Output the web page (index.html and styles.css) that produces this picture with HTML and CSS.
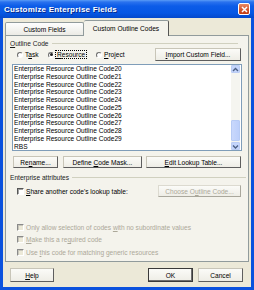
FILE: index.html
```html
<!DOCTYPE html>
<html lang="en">
<head>
  <meta charset="UTF-8" />
  <title>Customize Enterprise Fields</title>
  <link rel="stylesheet" href="styles.css">
</head>
<body>
  <div class="window">
    <div class="titlebar">
      <span class="title">Customize Enterprise Fields</span>
      <span class="close-btn">
        <svg width="7" height="7" viewBox="0 0 7 7"><path d="M1 1L6 6M6 1L1 6" stroke="#fff" stroke-width="1.5"/></svg>
      </span>
    </div>

    <div class="dialog">
      <div class="tabs">
        <div class="tab">Custom Fields</div>
        <div class="tab active">Custom Outline Codes</div>
      </div>

      <div class="panel">
        <div class="group-title short">
          <span><u>O</u>utline Code</span>
          <span class="rule"></span>
        </div>

        <div class="radio-row">
          <label class="radio task"><span class="radio-dot"></span><span>T<u>a</u>sk</span></label>
          <label class="radio resource"><span class="radio-dot on"></span><span class="focus"><u>R</u>esource</span></label>
          <label class="radio"><span class="radio-dot"></span><span><u>P</u>roject</span></label>
          <span class="btn import"><span><u>I</u>mport Custom Field...</span></span>
        </div>

        <div class="listbox">
          <div class="items">
            <div class="item">Enterprise Resource Outline Code20</div>
            <div class="item">Enterprise Resource Outline Code21</div>
            <div class="item">Enterprise Resource Outline Code22</div>
            <div class="item">Enterprise Resource Outline Code23</div>
            <div class="item">Enterprise Resource Outline Code24</div>
            <div class="item">Enterprise Resource Outline Code25</div>
            <div class="item">Enterprise Resource Outline Code26</div>
            <div class="item">Enterprise Resource Outline Code27</div>
            <div class="item">Enterprise Resource Outline Code28</div>
            <div class="item">Enterprise Resource Outline Code29</div>
            <div class="item">RBS</div>
          </div>
          <div class="scrollbar">
            <span class="arrow">
              <svg width="7" height="7" viewBox="0 0 7 7"><path d="M1 5L3.5 2.5L6 5" fill="none" stroke="#4d6185" stroke-width="1.4"/></svg>
            </span>
            <span class="track"><span class="thumb"></span></span>
            <span class="arrow">
              <svg width="7" height="7" viewBox="0 0 7 7"><path d="M1 2.5L3.5 5L6 2.5" fill="none" stroke="#4d6185" stroke-width="1.4"/></svg>
            </span>
          </div>
        </div>

        <div class="btn-row">
          <span class="btn rename"><span>Re<u>n</u>ame...</span></span>
          <span class="btn mask"><span>Define <u>C</u>ode Mask...</span></span>
          <span class="btn lookup"><span><u>E</u>dit Lookup Table...</span></span>
        </div>

        <div class="group-title">
          <span>Enterprise attributes</span>
          <span class="rule"></span>
        </div>

        <div class="share-row">
          <label class="check"><span class="box"></span><span><u>S</u>hare another code's lookup table:</span></label>
          <span class="btn choose disabled"><span>Choose O<u>u</u>tline Code...</span></span>
        </div>

        <div class="checks">
          <label class="check disabled"><span class="box"></span><span>Only allow selection of codes <u>w</u>ith no subordinate values</span></label>
          <label class="check disabled"><span class="box"></span><span><u>M</u>ake this a re<u>q</u>uired code</span></label>
          <label class="check disabled"><span class="box"></span><span>Use <u>t</u>his code for matching generic resources</span></label>
        </div>
      </div>

      <div class="footer">
        <span class="btn help"><span><u>H</u>elp</span></span>
        <span class="btn ok">OK</span>
        <span class="btn cancel">Cancel</span>
      </div>
    </div>
  </div>
</body>
</html>
```

FILE: styles.css
```css
* {
  box-sizing: border-box;
}

body {
  margin: 0;
  font-family: 'Liberation Sans', Arial, sans-serif;
  font-size: 6.6px;
  color: #000;
  background: #fff;
}

u {
  text-decoration-thickness: 1px;
  text-underline-offset: 1px;
}

.window {
  width: 254px;
  height: 290px;
  background: #0b52de;
  display: flex;
  flex-direction: column;
}

.titlebar {
  height: 18px;
  display: flex;
  align-items: center;
  padding: 0 4px 0 4px;
  background: linear-gradient(to bottom, #5a9cf7 0, #2a72ee 2px, #0c5ce8 6px, #0657e4 13px, #0449cc 18px);
}

.title {
  flex: 1;
  color: #fff;
  font-weight: bold;
  font-size: 8px;
  letter-spacing: 0.2px;
  text-shadow: 1px 1px 0 #0a2a8a;
}

.close-btn {
  width: 12px;
  height: 12px;
  display: flex;
  align-items: center;
  justify-content: center;
  border: 1px solid #fff;
  border-radius: 2px;
  background: linear-gradient(to bottom, #e98a64, #d4522a 60%, #c23c15);
}

.dialog {
  flex: 1;
  margin: 0 3px 3px 3px;
  background: #ece9d8;
  display: flex;
  flex-direction: column;
}

/* tabs */
.tabs {
  display: flex;
  align-items: flex-end;
  padding: 2px 0 0 2px;
  height: 17px;
}

.tab {
  height: 13px;
  width: 79px;
  display: flex;
  align-items: center;
  justify-content: center;
  border: 1px solid #919b9c;
  border-bottom: none;
  border-radius: 2px 2px 0 0;
  background: linear-gradient(to bottom, #fefefe, #ecebe5);
}

.tab.active {
  width: 85px;
  height: 16px;
  margin-bottom: -1px;
  position: relative;
  z-index: 1;
  background: #f4f3ec;
  border-left: none;
  border-right: 1px solid #555;
}

.panel {
  height: 227px;
  margin: 0 2px;
  border: 1px solid #919b9c;
  background: #f4f3ec;
  display: flex;
  flex-direction: column;
}

.group-title {
  margin-top: 3px;
  height: 8px;
  padding-left: 4px;
  display: flex;
  align-items: center;
  gap: 3px;
  color: #1a1a1a;
}

.group-title .rule {
  flex: 1;
  height: 1px;
  background: #d0d0bf;
  margin-right: 2px;
}

.group-title.short .rule {
  margin-right: 10px;
}

/* radios */
.radio-row {
  margin-top: 1px;
  height: 13px;
  padding: 0 7px 0 11px;
  display: flex;
  align-items: center;
}

.radio {
  display: flex;
  align-items: center;
}

.radio.task {
  width: 31px;
}

.radio.resource {
  width: 48px;
}

.radio-dot {
  width: 6px;
  height: 6px;
  margin-right: 2px;
  border-radius: 50%;
  border: 1px solid;
  border-color: #6f6f6f #fff #fff #6f6f6f;
  background: #fff;
  display: flex;
  align-items: center;
  justify-content: center;
}

.radio-dot.on::after {
  content: "";
  width: 3px;
  height: 3px;
  border-radius: 50%;
  background: #222;
}

.focus {
  outline: 1px dotted #000;
  outline-offset: 0;
  padding: 0 1px;
}

/* buttons */
.btn {
  height: 12px;
  display: flex;
  align-items: center;
  justify-content: center;
  border: 1px solid;
  border-color: #c8c5b8 #5e5e5e #5e5e5e #c8c5b8;
  background: linear-gradient(to bottom, #fbfbf8, #eeede6);
  white-space: nowrap;
}

.btn.disabled {
  color: #aca899;
  border-color: #dcdad0 #a9a79c #a9a79c #dcdad0;
}

.btn.import {
  margin-left: auto;
  width: 86px;
  height: 13px;
}

/* list */
.listbox {
  margin: 3px 0 0 6px;
  width: 230px;
  height: 87px;
  border: 1px solid #7f9db9;
  background: #fff;
  display: flex;
}

.items {
  flex: 1;
  padding-left: 1px;
}

.item {
  height: 7.75px;
  line-height: 7.75px;
  white-space: nowrap;
}

.scrollbar {
  width: 9px;
  margin-right: 1px;
  display: flex;
  flex-direction: column;
  background: #f5f5f0;
}

.arrow {
  height: 8px;
  display: flex;
  align-items: center;
  justify-content: center;
  border: 1px solid #bccdf4;
  border-radius: 1px;
  background: #c4d5fc;
}

.track {
  flex: 1;
  display: flex;
  flex-direction: column;
  justify-content: flex-end;
  padding-bottom: 1px;
}

.thumb {
  height: 21px;
  border: 1px solid #b7cbf5;
  border-radius: 1px;
  background: linear-gradient(to right, #c9d8fc, #bccffb);
}

.btn-row {
  margin-top: 5px;
  padding-left: 7px;
  display: flex;
}

.btn.rename {
  width: 45px;
}

.btn.mask {
  width: 79px;
  margin-left: 5px;
}

.btn.lookup {
  width: 95px;
  margin-left: 4px;
}

.group-title + .share-row {
  margin-top: 4px;
}

.btn-row + .group-title {
  margin-top: 5px;
}

/* checkboxes */
.share-row {
  height: 12px;
  padding: 0 7px 0 11px;
  display: flex;
  align-items: center;
}

.btn.choose {
  margin-left: auto;
  width: 83px;
}

.check {
  display: flex;
  align-items: center;
  gap: 2px;
}

.box {
  width: 7px;
  height: 7px;
  border: 1px solid;
  border-color: #555 #fff #fff #555;
  background: #fff;
  box-shadow: inset 1px 1px 0 #a0a0a0;
}

.checks {
  margin-top: 24px;
  padding-left: 11px;
}

.checks .check {
  height: 12.5px;
}

.check.disabled {
  color: #aca899;
}

.check.disabled .box {
  background: #ece9d8;
  border-color: #8a8a8a #fff #fff #8a8a8a;
  box-shadow: inset 1px 1px 0 #c8c6bb;
}

/* footer buttons */
.footer {
  flex: 1;
  padding: 6px 8px 0 7px;
  display: flex;
  align-items: flex-start;
}

.footer .btn {
  height: 14px;
  width: 45px;
}

.btn.help {
  width: 44px;
}

.btn.ok {
  margin-left: auto;
  border: 1px solid #3a3a3a;
  box-shadow: inset -1px -1px 0 #6e6e6e;
}

.btn.cancel {
  margin-left: 5px;
}
```
